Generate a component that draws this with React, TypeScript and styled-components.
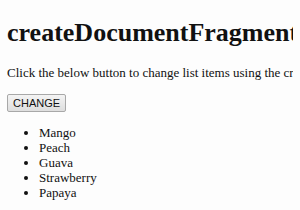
import { useState } from 'react';
import styled, { createGlobalStyle } from 'styled-components';

const GlobalStyle = createGlobalStyle`
  html, body {
    overflow: hidden;
  }
  body {
    margin: 7px;
    background: #fdfdfd;
    color: #111;
    font-family: "Liberation Serif", "Times New Roman", serif;
    font-size: 13px;
  }
`;

const Title = styled.h1`
  font-size: 26px;
  font-weight: bold;
  margin: 11px 0 17px;
  white-space: nowrap;
`;

const Text = styled.p`
  margin: 13px 0;
  white-space: nowrap;
`;

const Button = styled.button`
  font-family: "Liberation Sans", Arial, sans-serif;
  font-size: 11px;
  color: #111;
  background: linear-gradient(#f4f4f4, #dedede);
  border: 1px solid #a8a8a8;
  border-radius: 2px;
  padding: 2px 5px;
  margin: 0;
`;

const List = styled.ul`
  margin: 13px 0;
  padding-left: 32px;
  list-style: disc;
`;

const Item = styled.li`
  line-height: 15px;
`;

const fruits = ['Mango', 'Peach', 'Guava', 'Strawberry', 'Papaya'];

export default function App() {
  const [items, setItems] = useState(fruits);
  return (
    <>
      <GlobalStyle />
      <Title>createDocumentFragment() method</Title>
      <Text>Click the below button to change list items using the createDocumentFragment() method.</Text>
      <Button onClick={() => setItems([...items].reverse())}>CHANGE</Button>
      <List>
        {items.map((f) => (
          <Item key={f}>{f}</Item>
        ))}
      </List>
    </>
  );
}
